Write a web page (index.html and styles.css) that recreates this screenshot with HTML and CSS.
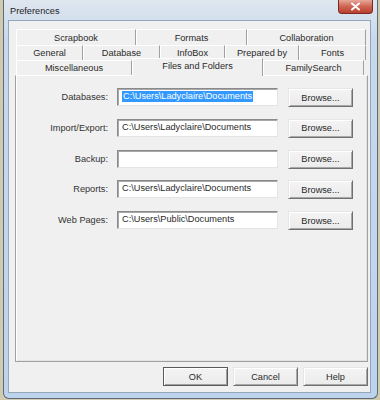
FILE: index.html
```html
<!DOCTYPE html>
<html>
<head>
<meta charset="UTF-8">
<title>Preferences</title>
<link rel="stylesheet" href="styles.css">
</head>
<body>
<div class="window">
	<div class="titlebar">
		<span class="title">Preferences</span>
		<span class="close">
			<svg width="11" height="9" viewBox="0 0 11 9"><path d="M2 1.5 L9 7.5 M9 1.5 L2 7.5" stroke="#fff" stroke-width="2" stroke-linecap="round"/></svg>
		</span>
	</div>
	<div class="client">
		<div class="tabs">
			<div class="tabrow r1">
				<div class="tab">Scrapbook</div>
				<div class="tab">Formats</div>
				<div class="tab">Collaboration</div>
			</div>
			<div class="tabrow r2">
				<div class="tab">General</div>
				<div class="tab">Database</div>
				<div class="tab">InfoBox</div>
				<div class="tab">Prepared by</div>
				<div class="tab">Fonts</div>
			</div>
			<div class="tabrow r3">
				<div class="tab">Miscellaneous</div>
				<div class="tab sel">Files and Folders</div>
				<div class="tab">FamilySearch</div>
			</div>
		</div>
		<div class="panel">
			<div class="form">
				<label>Databases:</label>
				<div class="field"><span class="hl">C:\Users\Ladyclaire\Documents</span></div>
				<button class="btn">Browse...</button>

				<label>Import/Export:</label>
				<div class="field">C:\Users\Ladyclaire\Documents</div>
				<button class="btn">Browse...</button>

				<label>Backup:</label>
				<div class="field"></div>
				<button class="btn">Browse...</button>

				<label>Reports:</label>
				<div class="field">C:\Users\Ladyclaire\Documents</div>
				<button class="btn">Browse...</button>

				<label>Web Pages:</label>
				<div class="field">C:\Users\Public\Documents</div>
				<button class="btn">Browse...</button>
			</div>
		</div>
		<div class="buttons">
			<button class="btn big default">OK</button>
			<button class="btn big">Cancel</button>
			<button class="btn big">Help</button>
		</div>
	</div>
</div>
</body>
</html>
```

FILE: styles.css
```css
*{margin: 0;padding: 0;box-sizing: border-box;}
body{
	background: #cfcab0;
	font-family: "Liberation Sans", Arial, sans-serif;
	font-size: 9.2px;
	color: #2a2a2a;
}
.window{
	margin-left: 3px;
	width: 375px;
	height: 399px;
	border: 1px solid #5d6b7b;
	border-top: none;
	border-radius: 0 0 6px 6px;
	background: linear-gradient(#dfe6ee, #c8d9ec 40px, #bdd3ec);
	display: flex;
	flex-direction: column;
}
.titlebar{
	height: 20px;
	display: flex;
	justify-content: space-between;
	align-items: flex-start;
}
.title{
	padding: 6px 0 0 6px;
	color: #1e1e1e;
}
.close{
	width: 35px;
	height: 14px;
	margin-right: 4px;
	border: 1px solid #7a2a22;
	border-top: none;
	border-radius: 0 0 4px 4px;
	background: linear-gradient(#e6a899, #cf6452 50%, #b8402f);
	display: flex;
	align-items: center;
	justify-content: center;
}
.client{
	flex: 1;
	margin: 0 6px 5px 4px;
	background: #f0f0f0;
	border: 1px solid #93a6bb;
	padding: 8px 2px 0 6px;
}
.tabs{
	margin-left: 1px;
	width: 350px;
}
.tabrow{
	display: grid;
	height: 15px;
}
.r1{height: 16px;grid-template-columns: 120px 111px 119px;}
.r2{grid-template-columns: 67px 77px 65px 74px 67px;}
.r3{grid-template-columns: 116px 131px 101px;}
.tab{
	display: flex;
	align-items: center;
	justify-content: center;
	border-top: 1px solid #fff;
	border-left: 1px solid #fff;
	border-right: 1px solid #a0a0a0;
	background: #f0f0f0;
	white-space: nowrap;
}
.tab.sel{
	position: relative;
	z-index: 1;
	margin-top: -2px;
	margin-bottom: -1px;
	align-items: flex-start;
	padding-top: 2px;
}
.panel{
	width: 353px;
	height: 287px;
	border: 1px solid #a0a0a0;
	border-top-color: #fff;
	box-shadow: inset 1px 0 0 #fff, inset -1px -1px 0 #e3e3e3;
}
.form{
	display: grid;
	grid-template-columns: 92px 160px 65px;
	grid-auto-rows: 18px;
	column-gap: 10px;
	row-gap: 12.75px;
	padding-top: 12px;
}
.form label{
	display: flex;
	align-items: center;
	justify-content: flex-end;
	color: #333;
}
.form .field{
	margin-left: -1px;
	background: #fff;
	border: 1px solid;
	border-color: #8a8a8a #e4e4e4 #e4e4e4 #8a8a8a;
	box-shadow: inset 1px 1px 0 #a8a8a8;
	padding: 0 0 2px 4px;
	display: flex;
	align-items: center;
	white-space: nowrap;
	overflow: hidden;
}
.hl{
	background: #3399ff;
	color: #fff;
	padding: 0 1px;
	line-height: 11px;
}
.btn{
	font: inherit;
	color: #2a2a2a;
	background: linear-gradient(#f4f4f4, #ebebeb);
	border: 1px solid;
	border-color: #e6e6e6 #707070 #707070 #e6e6e6;
	box-shadow: inset 1px 1px 0 #fff, inset -1px -1px 0 #a8a8a8;
	height: 19px;
}
.buttons{
	display: flex;
	justify-content: flex-end;
	gap: 5px;
	margin-top: 5px;
}
.btn.big{
	width: 65px;
	height: 19px;
}
.btn.default{
	border-color: #5a5a5a;
	box-shadow: inset 1px 1px 0 #fff, inset -1px -1px 0 #a0a0a0;
}
```
